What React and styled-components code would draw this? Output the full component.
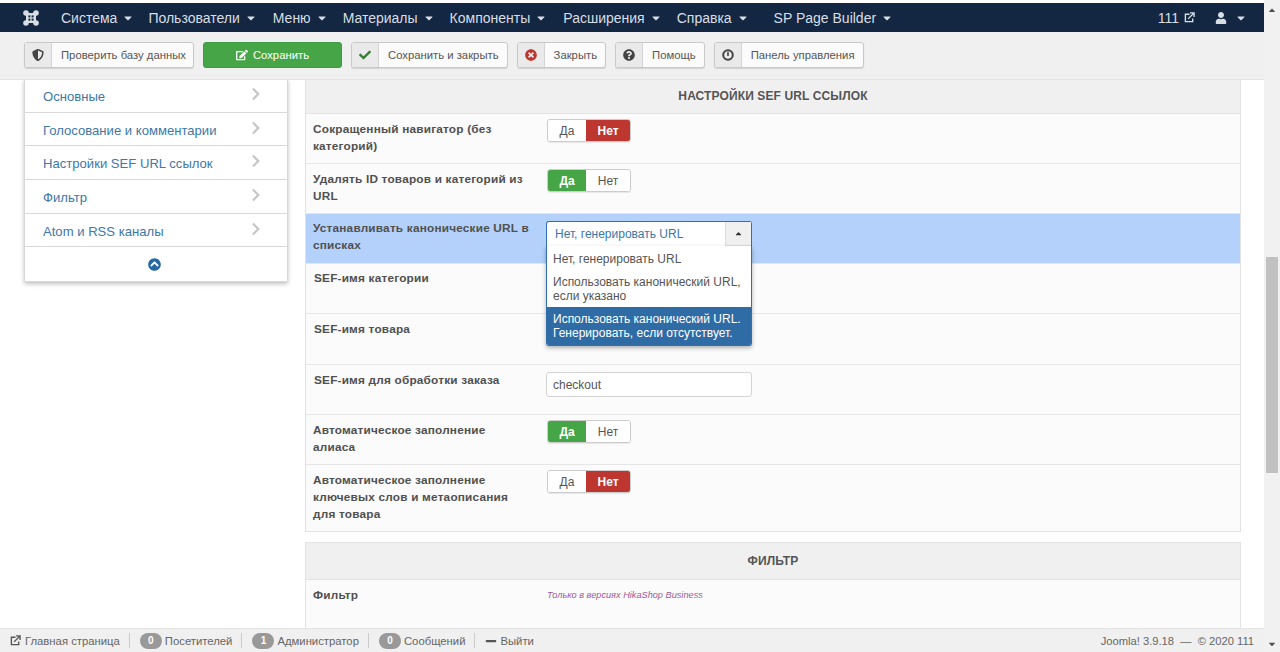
import React from "react";
import styled, { createGlobalStyle } from "styled-components";
import {
  FaCaretDown, FaCaretUp, FaCheck, FaChevronCircleUp, FaChevronRight, FaEdit,
  FaQuestionCircle, FaShieldAlt, FaTimesCircle, FaUser, FaMinus,
} from "react-icons/fa";

const Global = createGlobalStyle`
  html, body { margin: 0; padding: 0; height: 100%; overflow: hidden; background: #fff; }
  * { box-sizing: border-box; }
  body { font-family: "Liberation Sans", Arial, sans-serif; font-size: 13px; color: #555; }
`;

const Shell = styled.div`display: flex; width: 1280px; height: 652px; overflow: hidden;`;
const Page = styled.div`flex: 1; min-width: 0; display: flex; flex-direction: column; padding-top: 3px;`;
const Scrollbar = styled.div`
  width: 16px; background: #f1f1f1; display: flex; flex-direction: column; align-items: center;
  color: #505050; font-size: 10px; padding: 5px 0 3px;
`;
const ScrollThumb = styled.div`width: 12px; height: 216px; margin-top: 242px; margin-bottom: auto; background: #c1c1c1;`;

const Navbar = styled.nav`height: 29px; background: #132742; color: #d9dee5; display: flex; align-items: center; flex: none;`;
const Logo = styled.svg`width: 16px; height: 16px; margin: 0 22px 0 23px; flex: none;`;
const NavItem = styled.span`
  display: inline-flex; align-items: center; gap: 5px; font-size: 14px; margin-right: ${p => p.$gap}px; white-space: nowrap;
  > svg:last-child { font-size: 12px; }
`;
const NavRight = styled.div`margin-left: auto; display: flex; align-items: center; padding-right: 17px;`;
const NewTabIcon = styled.svg`width: ${p => p.$size || 11}px; height: ${p => p.$size || 11}px; flex: none;`;

const Toolbar = styled.div`
  height: 48px; flex: none; background: #f0f0f0; border-bottom: 1px solid #e4e4e4; display: flex; align-items: center; padding: 0 0 2px 24px; gap: 9px;
`;
const ToolButton = styled.button`
  height: 26px; padding: 0; display: inline-flex; align-items: stretch; border: 1px solid #c9c9c9; border-radius: 3px; overflow: hidden;
  background: #fbfbfb; font: 11.3px "Liberation Sans", Arial, sans-serif; color: #555; box-shadow: 0 1px 1px rgba(0,0,0,.12);
`;
const ToolIcon = styled.span`
  width: 27px; display: flex; align-items: center; justify-content: center; background: #eaeaea; border-right: 1px solid #d4d4d4;
  color: ${p => p.$color || "#444"}; font-size: 12px;
`;
const ToolLabel = styled.span`display: flex; align-items: center; padding: 0 ${p => p.$pr ?? 8}px 0 9px;`;
const SaveButton = styled.button`
  width: 139px; height: 26px; display: inline-flex; align-items: center; justify-content: center; gap: 5px; padding: 0;
  border: 1px solid #3f9c45; border-radius: 3px; background: #46a546; color: #fff; font: 11.3px "Liberation Sans", Arial, sans-serif;
  svg { font-size: 12px; }
`;
const GaugeIcon = styled.svg`width: 12px; height: 12px;`;

const Content = styled.div`flex: 1; min-height: 0; overflow: hidden; display: flex; align-items: flex-start; padding-left: 24px; background: #fff;`;
const SideCard = styled.div`
  width: 264px; flex: none; margin-top: -1px; background: #fff; border: 1px solid #d8d8d8; border-top: 0; border-radius: 0 0 2px 2px;
  box-shadow: 0 2px 4px rgba(0,0,0,.25); margin-right: 17px;
`;
const SideRow = styled.div`
  height: 33.7px; display: flex; align-items: center; justify-content: space-between; padding: 2px 24px 0 18px;
  border-bottom: 1px solid #d9d9d9; color: #3c78a8; font-size: 13.1px;
  svg { color: #c6c6c6; font-size: 14px; margin-top: -5px; }
`;
const SideToggle = styled.div`height: 34px; display: flex; align-items: center; justify-content: center; padding: 1px 3px 0 0; color: #27689f; font-size: 13px;`;

const Main = styled.div`width: 936px; flex: none; display: flex; flex-direction: column; gap: 10px;`;
const Fieldset = styled.section`border: 1px solid #e3e3e3; border-top: ${p => (p.$cut ? 0 : "1px solid #e3e3e3")}; background: #fbfbfb;`;
const Legend = styled.div`
  height: ${p => p.$h}px; display: flex; align-items: center; justify-content: center; background: #f0f0f0; padding-bottom: 1px;
  border-bottom: 1px solid #e3e3e3; font-weight: bold; font-size: 12px; color: #555; letter-spacing: .12px;
`;
const Row = styled.div`
  height: ${p => p.$h || 50}px; display: flex; padding: ${p => p.$pt ?? 7}px 0 0 7px; border-bottom: ${p => (p.$last ? 0 : "1px solid #e6e6e6")};
  background: ${p => (p.$active ? "#b3d1fb" : "transparent")}; position: relative;
`;
const Label = styled.div`
  width: 234px; flex: none; font-weight: bold; font-size: 11.8px; line-height: 17px; color: #505050; letter-spacing: .2px; padding: 0 17px 0 ${p => (p.$nudge ? 1 : 0)}px;
`;
const Toggle = styled.div`
  display: flex; height: 23px; width: 84px; border-radius: 3px; margin-top: -2px; overflow: hidden; border: 1px solid #ccc; box-shadow: 0 1px 1px rgba(0,0,0,.08);
`;
const ToggleSide = styled.span`
  flex: ${p => (p.$wide ? "1" : "0 0 38px")}; display: flex; align-items: center; justify-content: center; font-size: 12px;
  background: ${p => p.$bg || "#fff"}; color: ${p => (p.$bg ? "#fff" : "#555")}; font-weight: ${p => (p.$strong ? "bold" : "normal")};
`;
const TextInput = styled.div`
  width: 206px; height: 25px; margin-left: -1px; background: #fff; border: 1px solid #d4d4d4; border-radius: 3px; display: flex; align-items: center; padding-left: 6px; font-size: 12px; color: #555;
`;
const Select = styled.div`position: absolute; left: 240px; top: 7px; width: 206px; z-index: 2;`;
const SelectHead = styled.div`
  height: 25px; background: #fff; border: 1px solid #3071a9; border-bottom: 0; border-radius: 3px 3px 0 0; display: flex; justify-content: space-between; padding-left: 8px;
  color: #3c78a8; font-size: 12px; align-items: center;
`;
const SelectArrow = styled.span`
  width: 26px; height: 24px; background: #f0f0f0; border-left: 1px solid #ddd; border-bottom: 1px solid #ddd; display: flex; align-items: center; justify-content: center; color: #333; font-size: 9px;
`;
const SelectMenu = styled.div`
  position: absolute; left: 0; right: 0; top: 25px; background: #fff; border: 1px solid #3071a9; border-top: 0; border-radius: 0 0 3px 3px;
  box-shadow: 0 2px 4px rgba(0,0,0,.3); overflow: hidden;
`;
const Option = styled.div`
  padding: ${p => p.$pt ?? 5}px 6px ${p => p.$pb ?? 4}px; font-size: 12px; line-height: 14px; color: ${p => (p.$on ? "#fff" : "#555")}; background: ${p => (p.$on ? "#2f6ca5" : "#fff")};
`;
const Note = styled.div`font-size: 9.2px; font-style: italic; color: #9b5a9b; padding-top: 3px;`;

const Status = styled.footer`
  height: 24px; flex: none; background: #f0f0f0; border-top: 1px solid #e4e4e4; display: flex; align-items: center; padding: 0 10px 0 10px; font-size: 11.3px; color: #666; white-space: nowrap;
`;
const StatusItem = styled.span`
  display: inline-flex; align-items: center; gap: ${p => (p.$first ? 4 : 3)}px; padding: 0 9px 0 ${p => (p.$first ? 0 : 10)}px; height: 15px; border-left: ${p => (p.$first ? 0 : "1px solid #ccc")};
  svg { font-size: 12px; color: #555; }
`;
const Badge = styled.span`
  min-width: 22px; height: 16px; border-radius: 8px; background: #999; color: #fff; font-size: 10px; font-weight: bold; display: inline-flex; align-items: center; justify-content: center;
`;
const StatusRight = styled.span`margin-left: auto; font-size: 11.2px;`;

const nav = [["Система", 14], ["Пользователи", 16], ["Меню", 15], ["Материалы", 15], ["Компоненты", 16], ["Расширения", 15], ["Справка", 25], ["SP Page Builder", 0]];
const side = ["Основные", "Голосование и комментарии", "Настройки SEF URL ссылок", "Фильтр", "Atom и RSS каналы"];

function Yes({ on }) {
  return on
    ? <Toggle><ToggleSide $bg="#46a546" $strong>Да</ToggleSide><ToggleSide $wide>Нет</ToggleSide></Toggle>
    : <Toggle><ToggleSide>Да</ToggleSide><ToggleSide $bg="#bd362f" $strong $wide>Нет</ToggleSide></Toggle>;
}

function Tool({ icon, color, children, pr }) {
  return <ToolButton><ToolIcon $color={color}>{icon}</ToolIcon><ToolLabel $pr={pr}>{children}</ToolLabel></ToolButton>;
}

function NewTab({ size, color }) {
  return (
    <NewTabIcon $size={size} viewBox="0 0 12 12" fill="none" stroke={color} strokeWidth="1.5">
      <path d="M6 2.5H1.5v8h8V7" />
      <path d="M4.5 7.5L10 2M6.5 1h4.5v4.5" />
    </NewTabIcon>
  );
}

export default function App() {
  return (
    <Shell>
      <Global />
      <Page>
        <Navbar>
          <Logo viewBox="0 0 16 16">
            <g fill="#d9dee5">
              <rect x="3" y="3" width="10" height="10" />
              <circle cx="3" cy="3" r="2.8" />
              <circle cx="13" cy="3" r="2.8" />
              <circle cx="3" cy="13" r="2.8" />
              <circle cx="13" cy="13" r="2.8" />
            </g>
            <g fill="#132742">
              <rect x="5.4" y="5.4" width="2" height="2" />
              <rect x="8.6" y="5.4" width="2" height="2" />
              <rect x="5.4" y="8.6" width="2" height="2" />
              <rect x="8.6" y="8.6" width="2" height="2" />
            </g>
          </Logo>
          {nav.map(([t, g]) => <NavItem key={t} $gap={g}>{t}<FaCaretDown /></NavItem>)}
          <NavRight>
            <NavItem $gap={20}>111<NewTab size={11} color="#d9dee5" /></NavItem>
            <NavItem $gap={0}><FaUser style={{ fontSize: 12 }} /><FaCaretDown style={{ marginLeft: 3 }} /></NavItem>
          </NavRight>
        </Navbar>
        <Toolbar>
          <Tool icon={<FaShieldAlt />} pr={7}>Проверить базу данных</Tool>
          <SaveButton><FaEdit />Сохранить</SaveButton>
          <Tool icon={<FaCheck />} color="#378137">Сохранить и закрыть</Tool>
          <Tool icon={<FaTimesCircle />} color="#bd362f">Закрыть</Tool>
          <Tool icon={<FaQuestionCircle />}>Помощь</Tool>
          <Tool icon={
            <GaugeIcon viewBox="0 0 12 12" fill="none" stroke="#444">
              <circle cx="6" cy="6" r="4.8" strokeWidth="2" />
              <path d="M6 3v4" strokeWidth="1.6" />
            </GaugeIcon>
          }>Панель управления</Tool>
        </Toolbar>
        <Content>
          <SideCard>
            {side.map(s => <SideRow key={s}>{s}<FaChevronRight /></SideRow>)}
            <SideToggle><FaChevronCircleUp /></SideToggle>
          </SideCard>
          <Main>
            <Fieldset $cut>
              <Legend $h={34}>НАСТРОЙКИ SEF URL ССЫЛОК</Legend>
              <Row><Label>Сокращенный навигатор (без категорий)</Label><Yes /></Row>
              <Row><Label>Удалять ID товаров и категорий из URL</Label><Yes on /></Row>
              <Row $active $pt={6}><Label>Устанавливать канонические URL в списках</Label>
                <Select>
                  <SelectHead>Нет, генерировать URL<SelectArrow><FaCaretUp /></SelectArrow></SelectHead>
                  <SelectMenu>
                    <Option $pt={6}>Нет, генерировать URL</Option>
                    <Option>Использовать канонический URL, если указано</Option>
                    <Option $on $pb={5}>Использовать канонический URL. Генерировать, если отсутствует.</Option>
                  </SelectMenu>
                </Select>
              </Row>
              <Row $pt={6}><Label $nudge>SEF-имя категории</Label></Row>
              <Row $h={51}><Label $nudge>SEF-имя товара</Label></Row>
              <Row><Label $nudge>SEF-имя для обработки заказа</Label><TextInput>checkout</TextInput></Row>
              <Row><Label>Автоматическое заполнение алиаса</Label><Yes on /></Row>
              <Row $h={66} $last><Label>Автоматическое заполнение ключевых слов и метаописания для товара</Label><Yes /></Row>
            </Fieldset>
            <Fieldset>
              <Legend $h={37}>ФИЛЬТР</Legend>
              <Row $h={60}><Label>Фильтр</Label><Note>Только в версиях HikaShop Business</Note></Row>
            </Fieldset>
          </Main>
        </Content>
        <Status>
          <StatusItem $first><NewTab size={11} color="#555" />Главная страница</StatusItem>
          <StatusItem><Badge>0</Badge>Посетителей</StatusItem>
          <StatusItem><Badge>1</Badge>Администратор</StatusItem>
          <StatusItem><Badge>0</Badge>Сообщений</StatusItem>
          <StatusItem><FaMinus />Выйти</StatusItem>
          <StatusRight>Joomla! 3.9.18&nbsp; — &nbsp;© 2020 111</StatusRight>
        </Status>
      </Page>
      <Scrollbar>
        <FaCaretUp />
        <ScrollThumb />
        <FaCaretDown />
      </Scrollbar>
    </Shell>
  );
}
